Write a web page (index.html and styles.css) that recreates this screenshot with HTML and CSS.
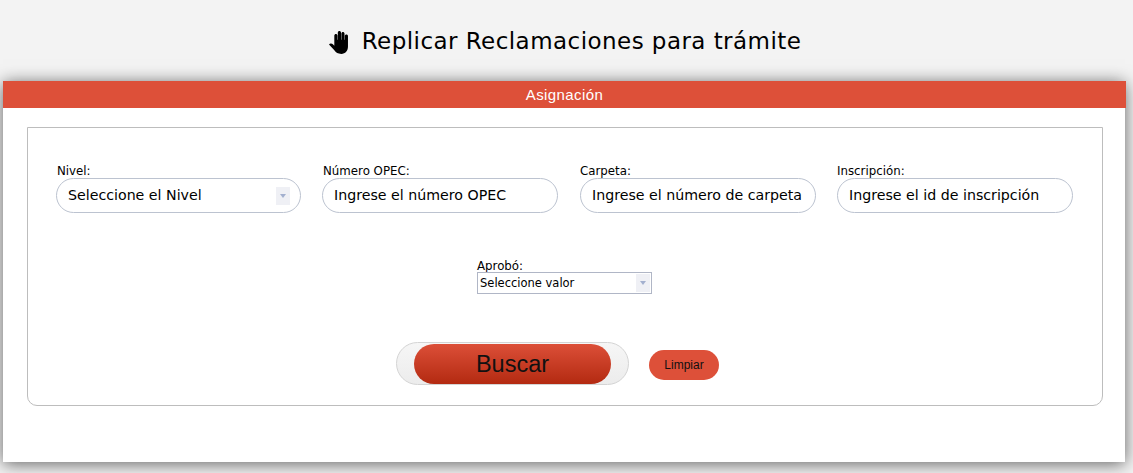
FILE: index.html
```html
<!DOCTYPE html>
<html lang="es">

<head>
    <meta charset="UTF-8">
    <meta name="viewport" content="width=device-width, initial-scale=1.0">
    <title>Replicar Reclamaciones</title>
    <link rel="stylesheet" href="styles.css">
</head>

<body>
    <h1 class="page-title">
        <svg class="hand" viewBox="0 0 24 26" aria-hidden="true">
            <path d="M0 15.800c1-1.500 3.200-1.300 4.500 0l1.300 1.300V6c0-2.300 3.400-2.300 3.400 0v4.500h.4V2.800c0-2.400 3.500-2.400 3.500 0v7.700h.4V3.800c0-2.300 3.400-2.300 3.400 0v6.700h.4V6.500c0-2.200 3.400-2.200 3.400 0V18c0 4.800-2.800 8-7.300 8-3.700 0-5.800-1.300-7.800-4.200L0 15.800z"/>
        </svg>
        Replicar Reclamaciones para trámite
    </h1>
    <div class="panel">
        <div class="panel-head">Asignación</div>
        <div class="panel-body">
            <form class="box" onsubmit="return false;">
                <div class="row">
                    <div class="field field-wide">
                        <label>Nivel:</label>
                        <div class="pill">Seleccione el Nivel<span class="arrow"></span></div>
                    </div>
                    <div class="field">
                        <label>Número OPEC:</label>
                        <div class="pill">Ingrese el número OPEC</div>
                    </div>
                    <div class="field field-shift">
                        <label>Carpeta:</label>
                        <div class="pill">Ingrese el número de carpeta</div>
                    </div>
                    <div class="field field-last">
                        <label>Inscripción:</label>
                        <div class="pill">Ingrese el id de inscripción</div>
                    </div>
                </div>
                <div class="row-center">
                    <div class="field-small">
                        <label>Aprobó:</label>
                        <div class="select-small">Seleccione valor<span class="arrow"></span></div>
                    </div>
                </div>
                <div class="actions">
                    <div class="search-wrap"><button class="btn-search">Buscar</button></div>
                    <button class="btn-clear">Limpiar</button>
                </div>
            </form>
        </div>
    </div>
</body>

</html>
```

FILE: styles.css
```css
* {
    box-sizing: border-box;
}

html,
body {
    height: 100%;
}

body {
    margin: 0;
    padding: 0 8px 0 3px;
    background-color: #f3f3f3;
    font-family: "DejaVu Sans", Verdana, sans-serif;
    color: #000;
    overflow: hidden;
}

.page-title {
    display: flex;
    justify-content: center;
    align-items: center;
    gap: 11px;
    height: 81px;
    margin: 0;
    padding: 0 0 0 2px;
    font-size: 23px;
    font-weight: normal;
    letter-spacing: 0.45px;
}

.hand {
    width: 22px;
    height: 24px;
    margin-top: 3px;
}

.panel {
    height: 381px;
    background-color: #fff;
    box-shadow: 0 2px 16px rgba(0, 0, 0, 0.6);
}

.panel-head {
    height: 27px;
    margin-right: -1px;
    background-color: #dd5039;
    color: #fff;
    font-family: "Liberation Sans", Arial, sans-serif;
    font-size: 15px;
    letter-spacing: 0.4px;
    line-height: 27px;
    text-align: center;
}

.panel-body {
    padding: 19px 22px 0 24px;
}

.box {
    height: 279px;
    border: 1px solid #bdbdbd;
    border-radius: 0 0 10px 10px;
    padding: 36px 28px 0;
}

.row {
    display: flex;
    gap: 21px;
}

.field {
    width: 236px;
}

.field-wide {
    width: 245px;
}

.field-shift {
    margin-left: 1px;
}

label {
    display: block;
    height: 14px;
    padding-left: 1px;
    font-size: 11.8px;
    line-height: 14px;
    white-space: nowrap;
}

.field-shift label,
.field-last label {
    padding-left: 0;
}

.pill {
    position: relative;
    height: 35px;
    padding-left: 11px;
    border: 1px solid #bcc3d0;
    border-radius: 18px;
    background-color: #fff;
    font-size: 14.2px;
    line-height: 33px;
    white-space: nowrap;
}

.arrow {
    position: absolute;
    top: 8px;
    right: 10px;
    width: 14px;
    height: 18px;
    background-color: #eff0f5;
}

.arrow::after {
    content: "";
    position: absolute;
    top: 7px;
    left: 4px;
    border-top: 4px solid #a3b0cf;
    border-left: 3px solid transparent;
    border-right: 3px solid transparent;
}

.row-center {
    display: flex;
    justify-content: center;
    margin-top: 45px;
    padding-right: 1px;
}

.field-small {
    width: 175px;
}

.field-small label {
    padding-left: 0;
    padding-top: 1px;
}

.select-small {
    position: relative;
    height: 22px;
    padding-left: 2px;
    border: 1px solid #b0b6c6;
    font-size: 11.5px;
    line-height: 20px;
    white-space: nowrap;
}

.select-small .arrow {
    top: 1px;
    right: 1px;
}

.actions {
    display: flex;
    justify-content: center;
    align-items: center;
    gap: 20px;
    margin-top: 48px;
    padding-right: 15px;
}

.search-wrap {
    display: flex;
    justify-content: center;
    width: 233px;
    height: 43px;
    padding-top: 1px;
    border: 1px solid #d4d4d4;
    border-radius: 22px;
    background: linear-gradient(#f6f6f6, #ececec);
}

.btn-search {
    width: 197px;
    height: 40px;
    padding: 0;
    border: none;
    border-radius: 20px;
    background: linear-gradient(#dc4f38, #b32a11);
    color: #111;
    font-family: "Liberation Sans", Arial, sans-serif;
    font-size: 23.5px;
}

.btn-clear {
    width: 70px;
    height: 30px;
    margin-top: 2px;
    padding: 0;
    border: none;
    border-radius: 15px;
    background-color: #dd5039;
    color: #111;
    font-family: "Liberation Sans", Arial, sans-serif;
    font-size: 12px;
}
```
